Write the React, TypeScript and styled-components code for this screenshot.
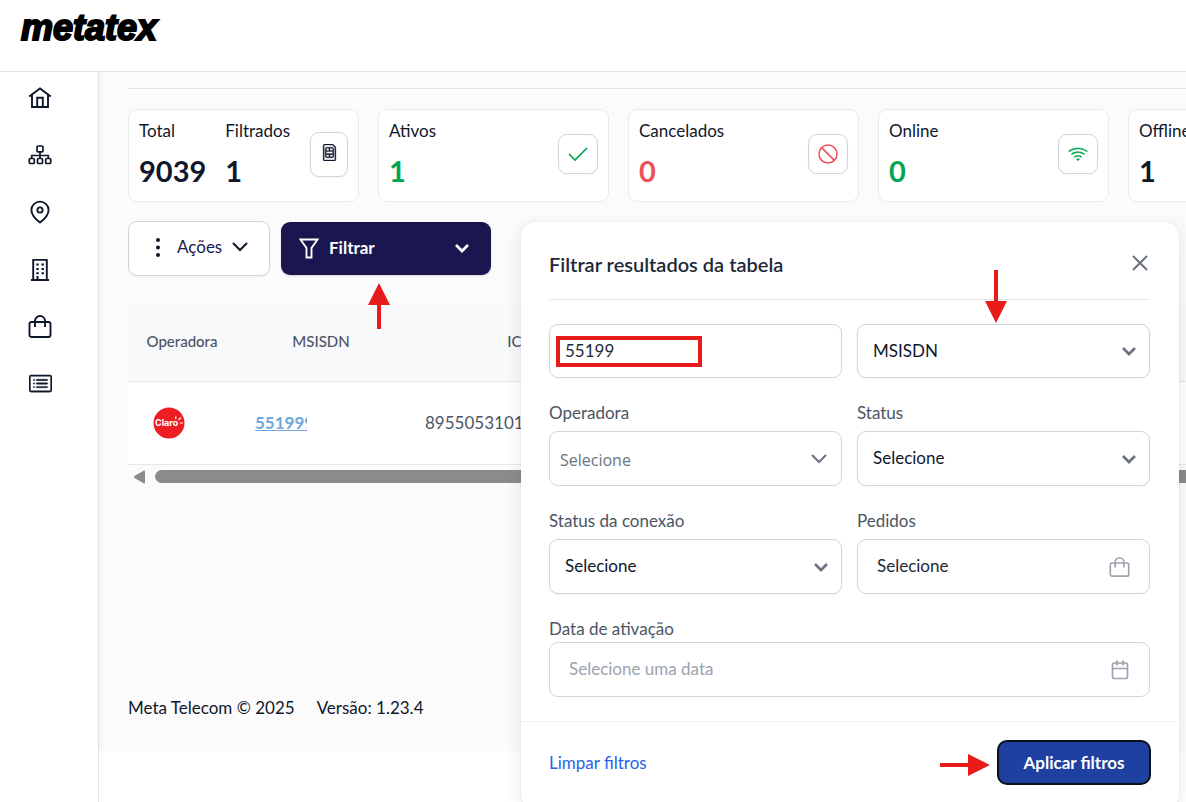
import React from "react";
import styled, { createGlobalStyle } from "styled-components";
import { BsCardList, BsSim, BsWifi } from "react-icons/bs";

const GlobalStyle = createGlobalStyle`
  *, *::before, *::after { box-sizing: border-box; }
  body { margin: 0; background: #fff; }
  body, button, input, select {
    font-family: Lato, "Open Sans", sans-serif;
    font-size: 17px;
    line-height: 24px;
    color: #0f172a;
  }
  button { cursor: pointer; }
`;

const Page = styled.div`
  min-height: 100vh;
  display: flex;
  flex-direction: column;
  overflow: hidden;
`;

const Header = styled.header`
  height: 72px;
  padding: 8px 21px;
  border-bottom: 1px solid #e5e5e7;
`;

const Logo = styled.a`
  font: italic bold 36px/40px "Liberation Sans", Arial, sans-serif;
  color: #000;
  text-decoration: none;
  -webkit-text-stroke: 2px #000;
`;

const Body = styled.div`
  flex: 1;
  display: flex;
`;

const Sidebar = styled.nav`
  flex: 0 0 99px;
  display: flex;
  flex-direction: column;
  align-items: center;
  gap: 33px;
  padding: 14px 18px 0 0;
  border-right: 1px solid #e2e2e5;
`;

const NavLink = styled.a`
  display: flex;
  align-items: center;
  justify-content: center;
  width: 24px;
  height: 24px;
  color: #0f172a;
`;

const Main = styled.main`
  flex: 1;
  min-width: 0;
  align-self: flex-start;
  padding: 16px 0 31px 29px;
  background: #fbfbfb;
  box-shadow: inset 6px 0 6px -4px rgba(0, 0, 0, 0.05);
`;

const Rule = styled.hr`
  margin: 0;
  border: 0;
  border-top: 1px solid #e5e5e7;
`;

const Cards = styled.section`
  display: flex;
  gap: 19px;
  margin-top: 20px;
  overflow: hidden;
`;

const Card = styled.article`
  flex: 0 0 231px;
  height: 93px;
  display: flex;
  align-items: center;
  justify-content: space-between;
  padding: 0 10px 3px;
  background: #fff;
  border: 1px solid #e9eaec;
  border-radius: 9px;
`;

const Stats = styled.div`
  display: flex;
  gap: 19px;
`;

const Stat = styled.div`
  display: flex;
  flex-direction: column;
  gap: 10px;
`;

const Value = styled.strong<{ $color?: string }>`
  font-size: 29px;
  line-height: 36px;
  color: ${(p) => p.$color ?? "#0f172a"};
`;

const IconBox = styled.span<{ $color: string; $tall?: boolean }>`
  display: flex;
  align-items: center;
  justify-content: center;
  width: ${(p) => (p.$tall ? 38 : 40)}px;
  height: ${(p) => (p.$tall ? 45 : 40)}px;
  padding-bottom: ${(p) => (p.$tall ? 3 : 0)}px;
  color: ${(p) => p.$color};
  border: 1px solid #d1d5db;
  border-radius: 9px;
  box-shadow: 0 1px 2px rgba(0, 0, 0, 0.05);
`;

const Toolbar = styled.div`
  position: relative;
  display: flex;
  gap: 11px;
  margin-top: 19px;
`;

const ActionsButton = styled.button`
  display: flex;
  align-items: center;
  width: 142px;
  height: 55px;
  padding: 0 18px 3px 26px;
  color: #1a1650;
  background: #fff;
  border: 1px solid #d1d5db;
  border-radius: 9px;
  box-shadow: 0 1px 2px rgba(0, 0, 0, 0.05);
  span { margin: 0 9px 0 16px; }
  > svg:last-child { color: #0f172a; }
`;

const FilterWrap = styled.div`
  position: relative;
  padding: 1px 0;
`;

const FilterButton = styled.button`
  display: flex;
  align-items: center;
  width: 210px;
  height: 53px;
  padding: 0 21px 2px 18px;
  color: #fff;
  font-weight: bold;
  background: #1a1650;
  border: 0;
  border-radius: 9px;
  box-shadow: 0 1px 2px rgba(0, 0, 0, 0.15);
  span { flex: 1; margin-left: 10px; text-align: left; }
`;

const TableScroll = styled.div`
  margin-top: 28px;
  overflow: hidden;
`;

const Table = styled.table`
  width: 100%;
  min-width: 1400px;
  table-layout: fixed;
  border-collapse: collapse;
  color: #4b5563;
  th, td { padding: 0; border-bottom: 1px solid #e5e7eb; text-align: center; }
  th { height: 77px; padding-bottom: 2px; font-size: 15px; font-weight: 500; background: #f8f9fb; }
  td { height: 83px; background: #fff; }
`;

const Col = styled.col<{ $w?: number }>`
  width: ${(p) => (p.$w ? `${p.$w}px` : "auto")};
`;

const CellText = styled.div<{ $w: number }>`
  width: ${(p) => p.$w}px;
  margin: 0 auto;
  text-align: left;
`;

const NumberLink = styled.a`
  display: block;
  width: 52px;
  overflow: hidden;
  font-weight: bold;
  color: #6fa8dc;
`;

const Carrier = styled.span`
  display: flex;
  width: 32px;
  margin-left: 25px;
`;

const ScrollTrack = styled.div`
  display: flex;
  align-items: center;
  gap: 10px;
  padding: 5px 0 0 6px;
`;

const Thumb = styled.div`
  flex: 1;
  height: 13px;
  background: #8b8b8b;
  border-radius: 7px 0 0 7px;
`;

const Footer = styled.footer`
  display: flex;
  gap: 22px;
  margin-top: 212px;
`;

const Panel = styled.form`
  position: absolute;
  top: 1px;
  left: 393px;
  right: 7px;
  background: #fff;
  border-radius: 14px;
  box-shadow: 0 0 1px rgba(15, 23, 42, 0.2), 0 4px 18px rgba(15, 23, 42, 0.09);
`;

const PanelBody = styled.div`
  padding: 0 29px 24px 28px;
`;

const PanelHead = styled.div`
  display: flex;
  align-items: center;
  justify-content: space-between;
  height: 78px;
  padding-top: 7px;
  border-bottom: 1px solid #e5e7eb;
  h2 { margin: 0; font-size: 20px; font-weight: 600; color: #1f2937; }
`;

const CloseButton = styled.button`
  display: flex;
  padding: 0 2px 3px;
  color: #6b7280;
  background: none;
  border: 0;
`;

const Grid = styled.div`
  display: grid;
  grid-template-columns: 1fr 1fr;
  gap: 15px;
  margin-top: 24px;
`;

const Field = styled.div<{ $wide?: boolean }>`
  grid-column: ${(p) => (p.$wide ? "1 / -1" : "auto")};
  display: flex;
  flex-direction: column;
  label { padding: 8px 0 ${(p) => (p.$wide ? 1 : 6)}px; color: #4b5563; }
`;

const Control = styled.div<{ $short?: boolean }>`
  position: relative;
  height: ${(p) => (p.$short ? 54 : 55)}px;
`;

const controlBase = `
  width: 100%;
  height: 100%;
  background: #fff;
  border: 1px solid #d1d5db;
  border-radius: 9px;
  outline: none;
`;

const Select = styled.select<{ $plain?: boolean }>`
  ${controlBase}
  appearance: none;
  padding: ${(p) => (p.$plain ? "2px 40px 0 10px" : "0 40px 1px 15px")};
  ${(p) => (p.$plain ? 'font-family: "Open Sans", sans-serif; font-size: 16px; color: #6b7280;' : "box-shadow: 0 1px 2px rgba(0, 0, 0, 0.05);")}
`;

const Input = styled.input<{ $inset: number }>`
  ${controlBase}
  padding: 0 50px 2px ${(p) => p.$inset}px;
  color: #1f2937;
  &::placeholder { color: #9ca3af; opacity: 1; }
`;

const Adornment = styled.span<{ $right: number; $light?: boolean }>`
  position: absolute;
  top: 0;
  bottom: 0;
  right: ${(p) => p.$right}px;
  display: flex;
  align-items: center;
  color: ${(p) => (p.$light ? "#9ca3af" : "#6b7280")};
  pointer-events: none;
`;

const PanelFoot = styled.div`
  display: flex;
  align-items: center;
  justify-content: space-between;
  padding: 18px 28px 24px;
  border-top: 1px solid #f1f2f4;
`;

const ClearButton = styled.button`
  padding: 0;
  color: #2563eb;
  background: none;
  border: 0;
`;

const ApplyWrap = styled.div`
  position: relative;
`;

const ApplyButton = styled.button`
  width: 154px;
  height: 45px;
  padding: 0;
  font-weight: bold;
  color: #fff;
  background: #1e40a0;
  border: 2px solid #0b0f1a;
  border-radius: 10px;
`;

const ArrowSlot = styled.span<{ $top: number; $left: string }>`
  position: absolute;
  top: ${(p) => p.$top}px;
  left: ${(p) => p.$left};
  display: flex;
  z-index: 1;
  pointer-events: none;
`;

const Highlight = styled.span`
  position: absolute;
  top: 12px;
  left: 7px;
  width: 146px;
  height: 31px;
  border: 4px solid #e81b1b;
  pointer-events: none;
`;

const Chevron = ({ bold = false }: { bold?: boolean }) =>
  bold ? (
    <svg width="16" height="12" viewBox="0 0 16 12" fill="none" stroke="currentColor" strokeWidth="2.7">
      <path d="M2 3l6 6 6-6" />
    </svg>
  ) : (
    <svg width="18" height="12" viewBox="0 0 18 12" fill="none" stroke="currentColor" strokeWidth="2">
      <path d="M2 2l7 7 7-7" />
    </svg>
  );

const Bag = ({ size }: { size: number }) => (
  <svg width={size} height={size} viewBox="0 0 24 24" fill="none" stroke="currentColor" strokeWidth="1.9">
    <rect x="1.5" y="8" width="21" height="15" rx="2" />
    <path d="M7 13V7a5 5 0 0 1 10 0v6" />
  </svg>
);

const HomeIcon = () => (
  <svg width="24" height="24" viewBox="0 0 24 24" fill="none" stroke="currentColor" strokeWidth="1.9">
    <path d="M1.200 10.500L12 2.500l10.800 8M4 8.500V21h16V8.500M9.200 21V11.800h5.600V21" />
  </svg>
);

const SitemapIcon = () => (
  <svg width="24" height="24" viewBox="0 0 24 24" fill="none" stroke="currentColor" strokeWidth="1.7">
    <rect x="9" y="3" width="6" height="5.800" rx="1" />
    <path d="M12 9v6.300M3.700 15.500v-3h16.600v3" />
    <rect x="1.300" y="15.500" width="5" height="5" rx="1" />
    <rect x="9.500" y="15.500" width="5" height="5" rx="1" />
    <rect x="17.700" y="15.500" width="5" height="5" rx="1" />
  </svg>
);

const PinIcon = () => (
  <svg width="24" height="24" viewBox="0 0 24 24" fill="none" stroke="currentColor" strokeWidth="1.900">
    <path d="M12 22.500C8 19.500 3.400 15 3.400 10a8.600 8.400 0 0 1 17.200 0c0 5-4.600 9.500-8.600 12.500z" />
    <circle cx="12" cy="10" r="2.600" />
  </svg>
);

const BuildingIcon = () => (
  <svg width="24" height="24" viewBox="0 0 24 24" fill="none" stroke="currentColor">
    <path d="M5.200 23V2.900h13.600V23M3 23h18" strokeWidth="1.900" />
    <path d="M9.500 6.500v11M14.700 6.500v11" strokeWidth="2.400" strokeDasharray="2 2.400" />
    <path d="M9.500 23v-4" strokeWidth="2" />
  </svg>
);

const FunnelIcon = () => (
  <svg width="20" height="22" viewBox="0 0 20 22" fill="none" stroke="currentColor" strokeWidth="1.900">
    <path d="M1.500 2.500h17l-6 8.500v9.500h-5V11z" />
  </svg>
);

const CheckIcon = () => (
  <svg width="20" height="16" viewBox="0 0 20 16" fill="none" stroke="currentColor" strokeWidth="1.700">
    <path d="M1 8l6 6L19 2" />
  </svg>
);

const BanIcon = () => (
  <svg width="20" height="20" viewBox="0 0 20 20" fill="none" stroke="currentColor" strokeWidth="1.500">
    <circle cx="10" cy="10" r="9" />
    <path d="M3.600 3.600l12.800 12.800" />
  </svg>
);

const CalendarIcon = () => (
  <svg width="20" height="22" viewBox="0 0 20 22" fill="none" stroke="currentColor" strokeWidth="1.700">
    <rect x="2.500" y="4" width="15" height="15.500" rx="2" />
    <path d="M2.500 9.500h15M7 1.500v5M13 1.500v5" />
  </svg>
);

const ClaroIcon = () => (
  <svg width="32" height="32" viewBox="0 0 32 32" role="img" aria-label="Claro">
    <circle cx="16" cy="16" r="15.500" fill="#ee1c25" />
    <text x="2" y="19" fill="#fff" fontFamily="Inter, sans-serif" fontSize="9" fontWeight="700">Claro</text>
    <path d="M22.800 9.500v2.600M28 10.500l-2.600 2.700M27 16h3" stroke="#fff" strokeWidth="1.200" />
  </svg>
);

/* Red pointer; each direction has its own outline, the head is 22px across. */
const Arrow = ({ dir, length }: { dir: "up" | "down" | "right"; length: number }) => {
  const across = dir === "right";
  const d = {
    down: `M9 0h4v${length - 22}h9L11 ${length} 0 ${length - 22}h9z`,
    up: `M11 0l11 22h-9v${length - 22}h-4V22H0z`,
    right: `M0 9h${length - 22}V0l22 11-22 11v-9H0z`,
  }[dir];
  return (
    <svg width={across ? length : 22} height={across ? 22 : length} fill="#e81b1b" aria-hidden="true">
      <path d={d} />
    </svg>
  );
};

const navItems = [
  { label: "Início", icon: <HomeIcon /> },
  { label: "Estrutura", icon: <SitemapIcon /> },
  { label: "Localização", icon: <PinIcon /> },
  { label: "Empresas", icon: <BuildingIcon /> },
  { label: "Pedidos", icon: <Bag size={24} /> },
  { label: "Registros", icon: <BsCardList size={23} stroke="currentColor" strokeWidth="0.3" /> },
];

const GREEN = "#00a651";
const RED = "#ef4f5a";

const cards = [
  {
    stats: [
      { label: "Total", value: "9039" },
      { label: "Filtrados", value: "1" },
    ],
    icon: <BsSim size={17} stroke="currentColor" strokeWidth="0.3" />,
    iconColor: "#0f172a",
    tall: true,
  },
  { stats: [{ label: "Ativos", value: "1", color: GREEN }], icon: <CheckIcon />, iconColor: GREEN },
  { stats: [{ label: "Cancelados", value: "0", color: RED }], icon: <BanIcon />, iconColor: RED },
  { stats: [{ label: "Online", value: "0", color: GREEN }], icon: <BsWifi size={20} stroke="currentColor" strokeWidth="0.2" />, iconColor: GREEN },
  { stats: [{ label: "Offline", value: "1" }], icon: <BsWifi size={20} />, iconColor: "#0f172a" },
] as {
  stats: { label: string; value: string; color?: string }[];
  icon: React.ReactNode;
  iconColor: string;
  tall?: boolean;
}[];

function FilterPanel() {
  return (
    <Panel onSubmit={(e) => e.preventDefault()}>
      <PanelBody>
        <PanelHead>
          <h2>Filtrar resultados da tabela</h2>
          <CloseButton type="button" aria-label="Fechar">
            <svg width="16" height="16" viewBox="0 0 16 16" stroke="currentColor" strokeWidth="2">
              <path d="M1 1l14 14M15 1L1 15" />
            </svg>
          </CloseButton>
        </PanelHead>
        <Grid>
          <Field>
            <Control $short>
              <Input $inset={15} aria-label="Busca" defaultValue="55199" />
              <Highlight />
            </Control>
          </Field>
          <Field>
            <Control $short>
              <Select aria-label="Tipo de busca">
                <option>MSISDN</option>
              </Select>
              <Adornment $right={13}><Chevron bold /></Adornment>
              <ArrowSlot $top={-54} $left="128px"><Arrow dir="down" length={53} /></ArrowSlot>
            </Control>
          </Field>
          <Field>
            <label htmlFor="operadora">Operadora</label>
            <Control>
              <Select id="operadora" $plain>
                <option>Selecione</option>
              </Select>
              <Adornment $right={14}><Chevron /></Adornment>
            </Control>
          </Field>
          <Field>
            <label htmlFor="status">Status</label>
            <Control>
              <Select id="status">
                <option>Selecione</option>
              </Select>
              <Adornment $right={13}><Chevron bold /></Adornment>
            </Control>
          </Field>
          <Field>
            <label htmlFor="conexao">Status da conexão</label>
            <Control>
              <Select id="conexao">
                <option>Selecione</option>
              </Select>
              <Adornment $right={13}><Chevron bold /></Adornment>
            </Control>
          </Field>
          <Field>
            <label htmlFor="pedidos">Pedidos</label>
            <Control>
              <Input $inset={19} id="pedidos" defaultValue="Selecione" />
              <Adornment $right={20} $light><Bag size={21} /></Adornment>
            </Control>
          </Field>
          <Field $wide>
            <label htmlFor="data">Data de ativação</label>
            <Control>
              <Input $inset={19} id="data" placeholder="Selecione uma data" />
              <Adornment $right={20} $light><CalendarIcon /></Adornment>
            </Control>
          </Field>
        </Grid>
      </PanelBody>
      <PanelFoot>
        <ClearButton type="button">Limpar filtros</ClearButton>
        <ApplyWrap>
          <ApplyButton type="submit">Aplicar filtros</ApplyButton>
          <ArrowSlot $top={14} $left="-57px"><Arrow dir="right" length={50} /></ArrowSlot>
        </ApplyWrap>
      </PanelFoot>
    </Panel>
  );
}

export default function App() {
  return (
    <Page>
      <GlobalStyle />
      <Header>
        <Logo href="#">metatex</Logo>
      </Header>
      <Body>
        <Sidebar>
          {navItems.map((item) => (
            <NavLink key={item.label} href="#" aria-label={item.label}>
              {item.icon}
            </NavLink>
          ))}
        </Sidebar>
        <Main>
          <Rule />
          <Cards>
            {cards.map((card) => (
              <Card key={card.stats[0].label}>
                <Stats>
                  {card.stats.map((s) => (
                    <Stat key={s.label}>
                      <span>{s.label}</span>
                      <Value $color={s.color}>{s.value}</Value>
                    </Stat>
                  ))}
                </Stats>
                <IconBox $color={card.iconColor} $tall={card.tall}>
                  {card.icon}
                </IconBox>
              </Card>
            ))}
          </Cards>
          <Toolbar>
            <ActionsButton type="button">
              <svg width="6" height="20" viewBox="0 0 6 20" fill="#0f172a">
                <circle cx="3" cy="3" r="2" />
                <circle cx="3" cy="10.500" r="2" />
                <circle cx="3" cy="18" r="2" />
              </svg>
              <span>Ações</span>
              <Chevron />
            </ActionsButton>
            <FilterWrap>
              <FilterButton type="button">
                <FunnelIcon />
                <span>Filtrar</span>
                <Chevron bold />
              </FilterButton>
              <ArrowSlot $top={62} $left="87px"><Arrow dir="up" length={46} /></ArrowSlot>
            </FilterWrap>
            <FilterPanel />
          </Toolbar>
          <TableScroll>
            <Table>
              <colgroup>
                <Col $w={108} />
                <Col $w={170} />
                <Col $w={242} />
                <Col />
              </colgroup>
              <thead>
                <tr>
                  <th>Operadora</th>
                  <th>MSISDN</th>
                  <th>ICCID</th>
                  <th />
                </tr>
              </thead>
              <tbody>
                <tr>
                  <td><Carrier><ClaroIcon /></Carrier></td>
                  <td>
                    <CellText $w={132}>
                      <NumberLink href="#">551999</NumberLink>
                    </CellText>
                  </td>
                  <td><CellText $w={204}>8955053101</CellText></td>
                  <td />
                </tr>
              </tbody>
            </Table>
          </TableScroll>
          <ScrollTrack>
            <svg width="11" height="14" viewBox="0 0 11 14" fill="#8b8b8b">
              <path d="M10 0.500q1 0 1 1v11q0 1-1 1L0.500 8q-1-1 0-2z" />
            </svg>
            <Thumb />
          </ScrollTrack>
          <Footer>
            <span>Meta Telecom © 2025</span>
            <span>Versão: 1.23.4</span>
          </Footer>
        </Main>
      </Body>
    </Page>
  );
}
